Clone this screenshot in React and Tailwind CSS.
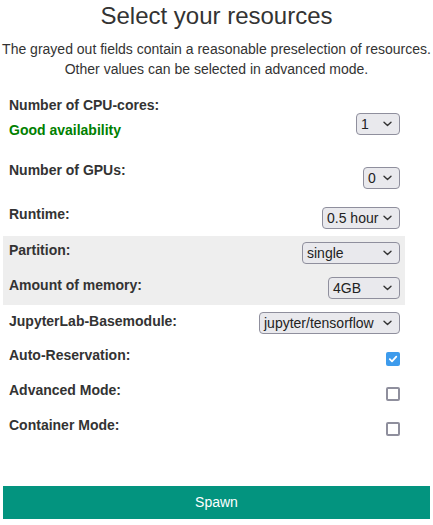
import React from "react";

function Chevron() {
  return (
    <svg width="9" height="6" viewBox="0 0 9 6" className="shrink-0">
      <path d="M1 1.2 L4.5 4.6 L8 1.2" fill="none" stroke="#333" strokeWidth="1.4" strokeLinecap="round" strokeLinejoin="round" />
    </svg>
  );
}

function Sel({ value, w, mt }) {
  return (
    <div
      className={`flex items-center justify-between h-[22px] rounded-[4px] border border-[#8f8f9d] bg-[#e9e9ed] pl-[4px] pr-[7px] text-[14px] leading-none text-[#222] ${w} ${mt}`}
    >
      <span>{value}</span>
      <Chevron />
    </div>
  );
}

function Box({ checked, mt }) {
  if (checked) {
    return (
      <div className={`w-[14px] h-[14px] rounded-[2px] bg-[#3d9bec] flex items-center justify-center ${mt}`}>
        <svg width="10" height="10" viewBox="0 0 10 10">
          <path d="M1.8 5.2 L4 7.3 L8.3 2.7" fill="none" stroke="#fff" strokeWidth="1.8" strokeLinecap="round" strokeLinejoin="round" />
        </svg>
      </div>
    );
  }
  return <div className={`w-[14px] h-[14px] rounded-[2px] border-2 border-[#8f8f9d] bg-white ${mt}`} />;
}

function Label({ children }) {
  return <div className="text-[14px] leading-[20px] font-bold text-[#333]">{children}</div>;
}

export default function App() {
  return (
    <div className="w-[433px] h-[525px] bg-white text-[#333]" style={{ fontFamily: '"Liberation Sans", Arial, sans-serif' }}>
      <h1 className="text-[24px] leading-[32px] text-center font-normal text-[#333]">Select your resources</h1>
      <p className="mt-[7px] text-[14px] leading-[20px] text-center text-[#333]">
        The grayed out fields contain a reasonable preselection of resources.
        <br />
        Other values can be selected in advanced mode.
      </p>

      <div className="ml-[3px] w-[402px]">
        {/* CPU */}
        <div className="mt-[16px] flex justify-between items-start pl-[6px] pr-[5px]">
          <div>
            <Label>Number of CPU-cores:</Label>
            <div className="mt-[5px] text-[14px] leading-[20px] font-bold text-[#008000]">Good availability</div>
          </div>
          <Sel value="1" w="w-[44px]" mt="mt-[18px]" />
        </div>

        {/* GPU */}
        <div className="mt-[20px] flex justify-between items-start pl-[6px] pr-[5px]">
          <Label>Number of GPUs:</Label>
          <Sel value="0" w="w-[37px]" mt="mt-[7px]" />
        </div>

        {/* Runtime */}
        <div className="mt-[15px] flex justify-between items-start pl-[6px] pr-[5px]">
          <Label>Runtime:</Label>
          <Sel value="0.5 hour" w="w-[78px]" mt="mt-[3px]" />
        </div>

        {/* Gray section */}
        <div className="mt-[7px] bg-[#eeeeee] h-[69px] pl-[6px] pr-[5px] pt-[4px]">
          <div className="flex justify-between items-start">
            <Label>Partition:</Label>
            <Sel value="single" w="w-[98px]" mt="mt-[2px]" />
          </div>
          <div className="mt-[11px] flex justify-between items-start">
            <Label>Amount of memory:</Label>
            <Sel value="4GB" w="w-[72px]" mt="mt-[2px]" />
          </div>
        </div>

        {/* Jupyter */}
        <div className="mt-[6px] flex justify-between items-start pl-[6px] pr-[5px]">
          <Label>JupyterLab-Basemodule:</Label>
          <Sel value="jupyter/tensorflow" w="w-[141px]" mt="mt-[1px]" />
        </div>

        {/* Auto */}
        <div className="mt-[11px] flex justify-between items-start pl-[6px] pr-[5px]">
          <Label>Auto-Reservation:</Label>
          <Box checked mt="mt-[7px]" />
        </div>

        <div className="mt-[14px] flex justify-between items-start pl-[6px] pr-[5px]">
          <Label>Advanced Mode:</Label>
          <Box mt="mt-[7px]" />
        </div>

        <div className="mt-[14px] flex justify-between items-start pl-[6px] pr-[5px]">
          <Label>Container Mode:</Label>
          <Box mt="mt-[7px]" />
        </div>
      </div>

      <div className="mt-[50px] mx-[3px] h-[33px] bg-[#03947f] flex items-center justify-center text-white text-[14px]">
        Spawn
      </div>
    </div>
  );
}
